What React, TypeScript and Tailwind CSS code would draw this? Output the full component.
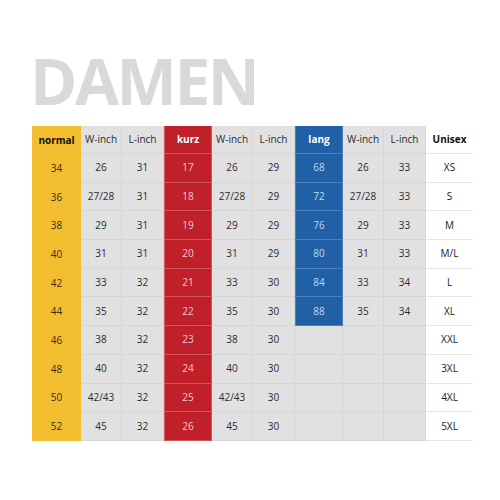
const cols = "grid grid-cols-[49px_41px_42px_48px_41px_42px_48px_41px_42px_47px]";

const rows = [
  ["34", "26", "31", "17", "26", "29", "68", "26", "33", "XS"],
  ["36", "27/28", "31", "18", "27/28", "29", "72", "27/28", "33", "S"],
  ["38", "29", "31", "19", "29", "29", "76", "29", "33", "M"],
  ["40", "31", "31", "20", "31", "29", "80", "31", "33", "M/L"],
  ["42", "33", "32", "21", "33", "30", "84", "33", "34", "L"],
  ["44", "35", "32", "22", "35", "30", "88", "35", "34", "XL"],
  ["46", "38", "32", "23", "38", "30", "", "", "", "XXL"],
  ["48", "40", "32", "24", "40", "30", "", "", "", "3XL"],
  ["50", "42/43", "32", "25", "42/43", "30", "", "", "", "4XL"],
  ["52", "45", "32", "26", "45", "30", "", "", "", "5XL"],
];

const header = ["normal", "W-inch", "L-inch", "kurz", "W-inch", "L-inch", "lang", "W-inch", "L-inch", "Unisex"];

function cellClass(col: number, row: number, isHeader: boolean) {
  if (col === 0) return "bg-[#f3bd30] text-[#3a2e10]";
  if (col === 3) return "bg-[#c0202a] text-[#f6c9cb] border-x border-b border-[#d4565c]";
  if (col === 6 && (isHeader || row < 6))
    return "bg-[#2260a5] text-[#b9d9f4] border-x border-b border-[#4a7fba]";
  if (col === 9) return "bg-white text-[#222222] border-b border-[#e6e6e6]";
  return "bg-[#e1e1e1] text-[#2b2b2b] border-r border-b border-[#d7d7d7]";
}

export default function App() {
  return (
    <main className="h-[500px] w-[500px] bg-white font-['Open_Sans',sans-serif]">
      <div className="pl-[30px] pt-[49px]">
        <h1 className="text-[64px] font-bold leading-none tracking-[-2.5px] text-[#d9d9d9]">
          DAMEN
        </h1>
      </div>

      <div className="ml-[32px] mt-[13px]">
        <div className={cols}>
          {header.map((h, i) => (
            <div
              key={i}
              className={`flex h-[28px] items-center justify-center text-[10px] ${cellClass(i, -1, true)} ${
                i === 0 || i === 3 || i === 6 || i === 9 ? "font-bold" : ""
              } ${i === 3 || i === 6 ? "!text-white" : ""} ${i === 0 || i === 9 ? "!text-[#111]" : ""}`}
            >
              {h}
            </div>
          ))}
        </div>
        {rows.map((r, ri) => (
          <div key={ri} className={cols}>
            {r.map((v, ci) => (
              <div
                key={ci}
                className={`flex h-[28.7px] items-center justify-center text-[10px] ${cellClass(ci, ri, false)}`}
              >
                {v}
              </div>
            ))}
          </div>
        ))}
      </div>
    </main>
  );
}
